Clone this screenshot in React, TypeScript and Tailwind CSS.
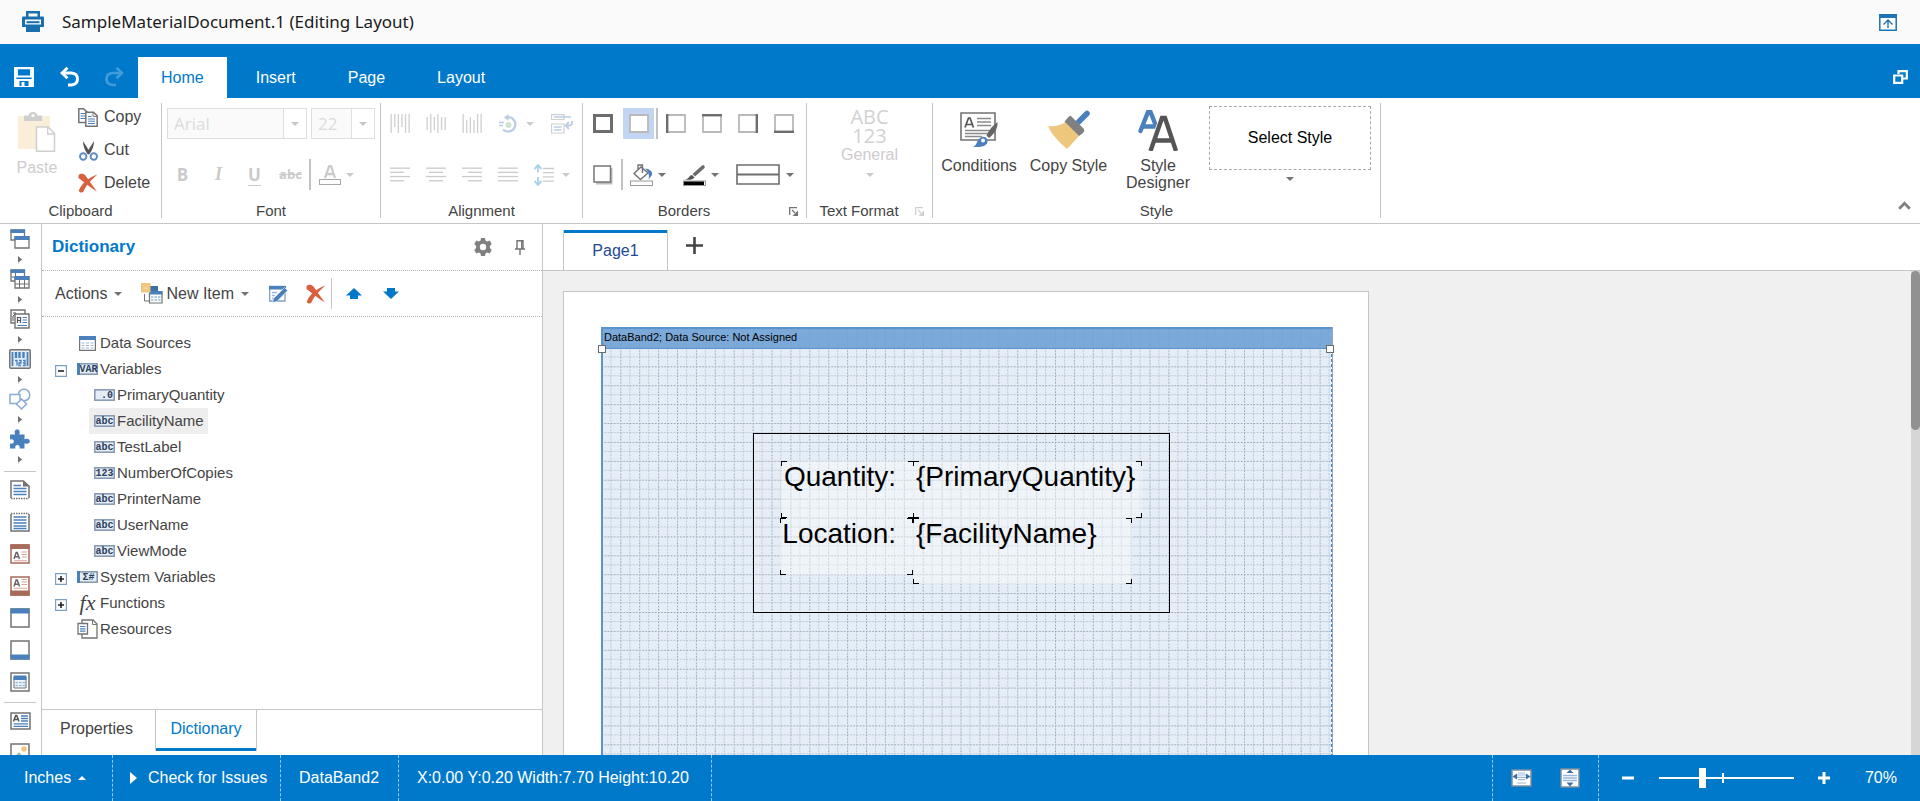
import React from "react";
import type { ReactNode } from "react";

const GRAY = "#737373";
const BLUE = "#4a80bb";

/* ---------- small helpers ---------- */

function Caret({ className = "text-[#737373]", dir = "down" }: { className?: string; dir?: "down" | "up" | "right" }) {
  if (dir === "right")
    return (
      <svg width="4" height="7" viewBox="0 0 4 7" className={className} aria-hidden="true">
        <path d="M0 0L4 3.5L0 7Z" fill="currentColor" />
      </svg>
    );
  return (
    <svg width="8" height="4" viewBox="0 0 8 4" className={className} aria-hidden="true">
      <path d={dir === "down" ? "M0 0H8L4 4Z" : "M0 4H8L4 0Z"} fill="currentColor" />
    </svg>
  );
}

function IconButton({
  label,
  width = "w-9",
  disabled = false,
  className = "",
  children,
}: {
  label: string;
  width?: string;
  disabled?: boolean;
  className?: string;
  children: ReactNode;
}) {
  return (
    <button
      type="button"
      aria-label={label}
      disabled={disabled}
      className={`flex h-[31px] shrink-0 items-center justify-center ${width} ${className}`}
    >
      {children}
    </button>
  );
}

function Group({ label, width, launcher, children }: { label: string; width: string; launcher?: string; children: ReactNode }) {
  return (
    <section aria-label={label} className={`flex shrink-0 ${width}`}>
      <div className="flex min-w-0 flex-1 flex-col pt-[5px]">
        <div className="h-[94px]">{children}</div>
        <div className="mt-1 flex h-5 items-center pr-2 text-[15px] leading-5">
          <span className={`flex-1 text-center ${launcher ? "pr-1" : "pl-2"}`}>{label}</span>
          {launcher && (
            <button type="button" aria-label={`${label} settings`} className={launcher}>
              <svg width="9" height="9" viewBox="0 0 9 9" aria-hidden="true">
                <path d="M.7 8V.7H8" fill="none" stroke="currentColor" strokeWidth="1.3" />
                <path d="M3 3L6 6" stroke="currentColor" strokeWidth="1.3" />
                <path d="M9 3.5V9H3.5Z" fill="currentColor" />
              </svg>
            </button>
          )}
        </div>
      </div>
      <div className="my-[5px] w-px bg-[#c6c6c6]" />
    </section>
  );
}

/* ---------- ribbon icons ---------- */

const DeleteIcon = () => (
  <svg width="20" height="20" viewBox="0 0 20 20" aria-hidden="true">
    <path d="M.5 2.500C1.500 0 5.500 0 7.500 2.500C10 6 14 12 19 18.500C12 14.500 6 9 .5 5Z" fill="#d9603f" />
    <path d="M19.500 1.500C14 6 8 12 5.500 18.500C4 20 1.500 20 .8 17.500C4 10 10.500 4.500 19.500 1.500Z" fill="#d9603f" />
  </svg>
);

const CopyIcon = () => (
  <svg width="20" height="19" viewBox="0 0 20 19" fill="none" aria-hidden="true">
    <path d="M.8.800H5.500L9.200 4.200V14.500H.8Z" fill="#fff" stroke={GRAY} strokeWidth="1.500" />
    <path d="M2.500 5.500H7M2.500 8H7M2.500 10.500H7" stroke={BLUE} />
    <path d="M7.800 4.200H15.500L19.200 7.800V18.200H7.800Z" fill="#fff" stroke={GRAY} strokeWidth="1.500" />
    <path d="M15 4.500V8.300H19" stroke={GRAY} />
    <path d="M10 8.500H13.500M10 11H17M10 13.200H17M10 15.500H17" stroke={BLUE} />
  </svg>
);

const CutIcon = () => (
  <svg width="19" height="21" viewBox="0 0 19 21" fill="none" aria-hidden="true">
    <path d="M4 1L11.500 13L9 14.500C5.500 10 4 6 4 1Z" fill="#555" />
    <path d="M15 1L7.500 13L10 14.500C13.500 10 15 6 15 1Z" fill="#555" />
    <circle cx="4.200" cy="16.500" r="3.200" stroke="#5b8cc4" strokeWidth="1.900" />
    <circle cx="14.800" cy="16.500" r="3.200" stroke="#5b8cc4" strokeWidth="1.900" />
  </svg>
);

const PasteIcon = () => (
  <svg width="38" height="40" viewBox="0 0 38 40" aria-hidden="true">
    <path d="M0 4H32V37H0Z" fill="#faeed8" />
    <path d="M6 9V4.500Q6 3.500 7 3.500H10.500Q11 0 15 0T19.500 3.500H23Q24 3.500 24 4.500V9Z" fill="#cfcfcf" />
    <circle cx="15" cy="3.500" r="1.600" fill="#fff" />
    <path d="M18.500 15H30L36.500 21.500V39.200H18.500Z" fill="#fff" stroke="#cfcfcf" strokeWidth="1.500" />
    <path d="M29.700 15V22H36.500" fill="none" stroke="#cfcfcf" strokeWidth="1.300" />
  </svg>
);

function Bars({ tops, heights }: { tops: number[]; heights: number[] }) {
  return (
    <svg width="20" height="19" viewBox="0 0 20 19" aria-hidden="true">
      {tops.map((t, i) => (
        <rect key={i} x={0.5 + i * 3.600} y={t} width="1.300" height={heights[i]} fill="#cfcfcf" />
      ))}
    </svg>
  );
}

function Lines({ rows }: { rows: [number, number][] }) {
  return (
    <svg width="20" height="15" viewBox="0 0 20 15" aria-hidden="true">
      {rows.map(([x, w], i) => (
        <rect key={i} x={x} y={0.500 + i * 4.200} width={w} height="1.300" fill="#cbcbcb" />
      ))}
    </svg>
  );
}

function BorderIcon({ side }: { side: "all" | "none" | "left" | "top" | "right" | "bottom" }) {
  const marks = {
    all: "M1.500 1.500H18.500V17.500H1.500Z",
    none: "",
    left: "M1.200 0V19",
    top: "M0 1.200H20",
    right: "M18.800 0V19",
    bottom: "M0 17.800H20",
  };
  return (
    <svg width="20" height="19" viewBox="0 0 20 19" fill="none" aria-hidden="true">
      <path d="M1 1H19V18H1Z" fill="#fff" stroke="#b9b9b9" strokeWidth="1.800" />
      <path d={marks[side]} stroke="#6d6d6d" strokeWidth={side === "all" ? 3 : 2.400} />
    </svg>
  );
}

const ConditionsIcon = () => (
  <svg width="38" height="36" viewBox="0 0 38 36" fill="none" aria-hidden="true">
    <path d="M1 1H35V28H1Z" fill="#fff" stroke={GRAY} strokeWidth="1.600" />
    <path d="M5 15.500L8.500 6H10L13.500 15.500M6.500 12.500H12" stroke="#555" strokeWidth="1.700" />
    <path d="M17 6.500H31M17 10H31M17 13.500H31M5 18.500H31M5 21.500H29M5 24.500H22" stroke="#8a8a8a" strokeWidth="1.300" />
    <path d="M37.500 10C38 17 34 22 29 26L26.500 23.500C28.500 19 32 14 37.500 10Z" fill="#666" />
    <path d="M13 35C18 33 16 27 22 25C26 24 29 28 27 31.500C24 35.500 18 35 13 35Z" fill={BLUE} />
    <circle cx="23" cy="28.500" r="2" fill="#fff" />
  </svg>
);

const BroomIcon = () => (
  <svg width="43" height="40" viewBox="0 0 43 40" aria-hidden="true">
    <path d="M31.500 12L40 3.500" stroke={BLUE} strokeWidth="5.500" strokeLinecap="round" />
    <path d="M18.500 12L32 26L20 39C12 32 5 25 1 16C8 17 14 15 18.500 12Z" fill="#efc77c" />
    <path d="M24 6L37 19Q38 21 36 23L32 26L17.500 11.500L21 7.500Q23 5 24 6Z" fill="#808080" />
  </svg>
);

const StyleAAIcon = () => (
  <svg width="40" height="41" viewBox="0 0 40 41" fill="none" aria-hidden="true">
    <path d="M2.500 21L10 2H12.500L20 21M4.500 16.500H18" stroke={BLUE} strokeWidth="4.400" strokeLinecap="round" />
    <path d="M12.500 41L24 8H27L38 41M16 30.500H34.500" stroke="#fff" strokeWidth="6" />
    <path d="M12.500 41L24 8H27L38 41M16 30.500H34.500" stroke="#555" strokeWidth="4.400" />
  </svg>
);

/* ---------- ribbon ---------- */

function Combo({ label, value, width }: { label: string; value: string; width: string }) {
  return (
    <div className={`grid h-[31px] ${width}`}>
      <select
        disabled
        aria-label={label}
        defaultValue={value}
        className="[grid-area:1/1] w-full appearance-none border border-[#dedede] bg-[#fafafa] px-[6px] font-['Open_Sans',sans-serif] text-[17px] leading-6 text-[#dcdcdc] opacity-100"
      >
        <option>{value}</option>
      </select>
      <span className="pointer-events-none [grid-area:1/1] flex w-6 items-center justify-center justify-self-end border border-[#dedede] bg-white">
        <Caret className="text-[#c6c6c6]" />
      </span>
    </div>
  );
}

function BigButton({ label, width, icon }: { label: string; width: string; icon: ReactNode }) {
  return (
    <button type="button" className={`flex flex-col items-center text-base leading-[17px] ${width}`}>
      <span className="flex h-[54px] items-center">{icon}</span>
      {label}
    </button>
  );
}

function Ribbon() {
  return (
    <div className="flex h-[126px] shrink-0 border-b border-[#c6c6c6] bg-white">
      <Group label="Clipboard" width="w-[162px]">
        <div className="flex">
          <button type="button" disabled className="flex w-[74px] flex-col items-center pt-[9px] text-base leading-5 text-[#cfcbcf]">
            <PasteIcon />
            <span className="mt-[6px]">Paste</span>
          </button>
          <div className="flex h-[94px] flex-col justify-between pl-1">
            {[
              ["Copy", <CopyIcon />],
              ["Cut", <CutIcon />],
              ["Delete", <DeleteIcon />],
            ].map(([t, icon]) => (
              <button key={t as string} type="button" className="flex h-7 items-center gap-[6px] text-base">
                <span className="flex w-5 justify-center">{icon}</span>
                {t}
              </button>
            ))}
          </div>
        </div>
      </Group>

      <Group label="Font" width="w-[219px]">
        <div className="flex flex-col gap-5 pt-[5px] pl-[5px]">
          <div className="flex gap-1">
            <Combo label="Font family" value="Arial" width="w-[140px]" />
            <Combo label="Font size" value="22" width="w-16" />
          </div>
          <div className="flex font-['Open_Sans',sans-serif] text-[17px] font-bold text-[#cbcbcb]">
            <IconButton label="Bold" disabled width="w-[31px]">B</IconButton>
            <IconButton label="Italic" disabled width="w-[41px]" className="font-['Liberation_Serif',serif] text-[18px] italic">I</IconButton>
            <IconButton label="Underline" disabled width="w-[31px]" className="underline underline-offset-4">U</IconButton>
            <IconButton label="Strikethrough" disabled width="w-[41px]" className="text-[13px] line-through">abc</IconButton>
            <div className="-ml-0.5 w-0.5 bg-[#c2c2c2]" />
            <IconButton label="Font colour" disabled width="w-[37px]">
              <svg width="22" height="20" viewBox="0 0 22 20" aria-hidden="true">
                <path d="M6 13L10.200 1H12L16 13M7.500 9H14.500" fill="none" stroke="#cbcbcb" strokeWidth="2.300" />
                <rect x=".5" y="14.500" width="21" height="5" fill="#fff" stroke="#a8a8a8" />
              </svg>
            </IconButton>
            <IconButton label="Font colour options" disabled width="w-2" className="-ml-0.5">
              <Caret className="text-[#cbcbcb]" />
            </IconButton>
          </div>
        </div>
      </Group>

      <Group label="Alignment" width="w-[202px]">
        <div className="flex flex-col gap-5 pt-[5px] pl-px">
          <div className="flex">
            <IconButton label="Align top" disabled>
              <Bars tops={[0, 0, 0, 0, 0, 0]} heights={[19, 13, 19, 13, 19, 19]} />
            </IconButton>
            <IconButton label="Align middle" disabled>
              <Bars tops={[3, 0, 3, 0, 3, 3]} heights={[13, 19, 13, 19, 13, 13]} />
            </IconButton>
            <IconButton label="Align bottom" disabled>
              <Bars tops={[0, 6, 3, 6, 0, 0]} heights={[19, 13, 16, 13, 19, 19]} />
            </IconButton>
            <IconButton label="Rotation" disabled>
              <svg width="19" height="20" viewBox="0 0 19 20" fill="none" aria-hidden="true">
                <path d="M8.500 3.200A7.200 7.200 0 1 1 4 15.500" stroke="#bccde4" strokeWidth="2.300" />
                <path d="M9.500 0V7L5 3.500Z" fill="#bccde4" />
                <path d="M0 8.500H5M0 11.500H4" stroke="#bccde4" strokeWidth="1.500" />
                <circle cx="9.500" cy="11" r="3" fill="#cfe3d3" />
              </svg>
            </IconButton>
            <IconButton label="Rotation options" disabled width="w-2">
              <Caret className="text-[#cbcbcb]" />
            </IconButton>
            <IconButton label="Wrap text" disabled width="w-14">
              <svg width="22" height="20" viewBox="0 0 22 20" fill="none" aria-hidden="true">
                <path d="M.6.600H13V5.500H.6ZM.6 10H13V19H.6Z" stroke="#cfcfcf" strokeWidth="1.200" />
                <path d="M3 3H20M3 13H10.500M3 16H10.500" stroke="#bccde4" strokeWidth="1.300" />
                <path d="M21 7V9Q21 11.500 18 11.500H15M18 8L14.500 11.500L18 15" stroke="#bccde4" strokeWidth="1.800" />
              </svg>
            </IconButton>
          </div>
          <div className="flex">
            <IconButton label="Align left" disabled>
              <Lines rows={[[0, 20], [0, 14], [0, 20], [0, 14]]} />
            </IconButton>
            <IconButton label="Align centre" disabled>
              <Lines rows={[[0, 20], [3, 14], [0, 20], [3, 14]]} />
            </IconButton>
            <IconButton label="Align right" disabled>
              <Lines rows={[[0, 20], [6, 14], [0, 20], [6, 14]]} />
            </IconButton>
            <IconButton label="Justify" disabled>
              <Lines rows={[[0, 20], [0, 20], [0, 20], [0, 20]]} />
            </IconButton>
            <IconButton label="Line spacing" disabled>
              <svg width="20" height="22" viewBox="0 0 20 22" fill="none" aria-hidden="true">
                <path d="M4 2V8.500M4 13V20" stroke="#a9d3ea" strokeWidth="1.800" />
                <path d="M.5 5L4 1L7.500 5M.5 17L4 21L7.500 17" stroke="#a9d3ea" strokeWidth="1.900" />
                <path d="M9 4.500H20M9 8.700H20M9 12.900H20M9 17.100H20" stroke="#cbcbcb" strokeWidth="1.300" />
              </svg>
            </IconButton>
            <IconButton label="Line spacing options" disabled width="w-2">
              <Caret className="text-[#cbcbcb]" />
            </IconButton>
          </div>
        </div>
      </Group>

      <Group label="Borders" width="w-56" launcher="text-[#737373]">
        <div className="flex flex-col gap-5 pt-[5px] pl-0.5">
          <div className="flex">
            <IconButton label="All borders"><BorderIcon side="all" /></IconButton>
            <IconButton label="No border" width="w-[31px]" className="ml-0.5 bg-[#c2d5f2]"><BorderIcon side="none" /></IconButton>
            <div className="ml-0.5 w-0.5 bg-[#c2c2c2]" />
            <IconButton label="Left border"><BorderIcon side="left" /></IconButton>
            <IconButton label="Top border"><BorderIcon side="top" /></IconButton>
            <IconButton label="Right border"><BorderIcon side="right" /></IconButton>
            <IconButton label="Bottom border"><BorderIcon side="bottom" /></IconButton>
          </div>
          <div className="flex">
            <IconButton label="Shadow">
              <svg width="20" height="20" viewBox="0 0 20 20" aria-hidden="true">
                <path d="M3 3H19.500V19.500H3Z" fill="#bdbdbd" />
                <path d="M1 1H17.500V17H1Z" fill="#fff" stroke="#777" strokeWidth="1.500" />
              </svg>
            </IconButton>
            <div className="w-0.5 bg-[#c2c2c2]" />
            <IconButton label="Fill colour">
              <svg width="23" height="22" viewBox="0 0 23 22" fill="none" aria-hidden="true">
                <path d="M4 9.500L11 3L18 9L10.500 15.500Z" stroke={GRAY} strokeWidth="1.400" />
                <path d="M8 5.500V1H12.500V9" stroke={GRAY} strokeWidth="1.400" />
                <path d="M15 4.500C20 5 23 8 22 11L18.500 15.500C19.500 12 19 8 15 4.500Z" fill={BLUE} />
                <rect x=".5" y="17" width="22" height="4.500" fill="#fff" stroke="#999" />
              </svg>
            </IconButton>
            <IconButton label="Fill colour options" width="w-2" className="-ml-px"><Caret /></IconButton>
            <IconButton label="Border colour" width="w-14">
              <svg width="23" height="22" viewBox="0 0 23 22" aria-hidden="true">
                <path d="M21 1.500C22 2.500 22 3.500 21 4.500L12 12.500L9.500 10L19 1.500Q20 .5 21 1.500Z" fill="#6d6d6d" />
                <path d="M9 11L11.500 13.500C10 16 6 16 2 15.500C6 15 6 11.500 9 11Z" fill="#555" />
                <rect x=".5" y="17" width="22" height="4.500" fill="#fff" stroke="#999" />
                <rect x="1" y="17.500" width="20" height="3.500" fill="#000" />
              </svg>
            </IconButton>
            <IconButton label="Border colour options" width="w-2" className="-ml-[11px]"><Caret /></IconButton>
            <IconButton label="Border style" width="w-[78px]">
              <svg width="44" height="21" viewBox="0 0 44 21" fill="none" aria-hidden="true">
                <path d="M1 1H43V20H1Z" stroke="#6d6d6d" strokeWidth="1.600" />
                <path d="M1 10.500H43" stroke="#6d6d6d" strokeWidth="2" />
              </svg>
            </IconButton>
            <IconButton label="Border style options" width="w-2" className="-ml-[11px]"><Caret /></IconButton>
          </div>
        </div>
      </Group>

      <Group label="Text Format" width="w-[126px]" launcher="text-[#d0d0d0]">
        <button type="button" disabled className="flex w-full flex-col items-center pt-1 text-[#cfcbcf]">
          <span className="font-['Open_Sans',sans-serif] text-xl leading-[19px] text-[#d2d2d2]">
            ABC
            <br />
            123
          </span>
          <span className="text-base leading-5">General</span>
          <Caret className="mt-2 text-[#cbcbcb]" />
        </button>
      </Group>

      <Group label="Style" width="w-[448px]">
        <div className="flex">
          <BigButton label="Conditions" width="w-[92px]" icon={<ConditionsIcon />} />
          <BigButton label="Copy Style" width="w-[87px]" icon={<BroomIcon />} />
          <BigButton label="Style Designer" width="w-[92px]" icon={<StyleAAIcon />} />
          <button type="button" className="ml-[5px] flex w-[162px] flex-col items-center pt-[3px] text-base text-black">
            <span className="flex h-16 w-full items-center justify-center border border-dashed border-[#a8a8a8]">Select Style</span>
            <Caret className="mt-[7px] text-[#737373]" />
          </button>
        </div>
      </Group>

      <button type="button" aria-label="Collapse ribbon" className="mt-auto mr-[9px] mb-[13px] ml-auto">
        <svg width="13" height="9" viewBox="0 0 13 9" fill="none" aria-hidden="true">
          <path d="M1.200 7.800L6.500 2.200L11.800 7.800" stroke="#808080" strokeWidth="2.800" />
        </svg>
      </button>
    </div>
  );
}

/* ---------- toolbox ---------- */

const toolGroups: { label: string; icon: ReactNode }[] = [
  {
    label: "Bands",
    icon: (
      <svg width="20" height="20" viewBox="0 0 20 20" fill="none" aria-hidden="true">
        <path d="M1 1H14.500V11H1Z" fill="#fff" stroke={GRAY} strokeWidth="1.300" />
        <path d="M.5.500H15V4H.5Z" fill={BLUE} />
        <path d="M5 8H19V19H5Z" fill="#fff" stroke={GRAY} strokeWidth="1.300" />
        <path d="M4.500 7H19.500V11H4.500Z" fill={BLUE} />
      </svg>
    ),
  },
  {
    label: "Cross bands",
    icon: (
      <svg width="20" height="20" viewBox="0 0 20 20" fill="none" aria-hidden="true">
        <path d="M1 1H14.500V12H1Z" fill="#fff" stroke={GRAY} strokeWidth="1.300" />
        <path d="M1 8H15M5.500 4V12" stroke={GRAY} />
        <path d="M.5.500H15V4H.5Z" fill={BLUE} />
        <path d="M5 8H19V19H5Z" fill="#fff" stroke={GRAY} strokeWidth="1.300" />
        <path d="M5 15H19M9.500 11V19M14.500 11V19" stroke={GRAY} />
        <path d="M4.500 7H19.500V11H4.500Z" fill={BLUE} />
      </svg>
    ),
  },
  {
    label: "Components",
    icon: (
      <svg width="20" height="20" viewBox="0 0 20 20" fill="none" aria-hidden="true">
        <path d="M1 1H15V14H1Z" fill="#fff" stroke={GRAY} strokeWidth="1.400" />
        <path d="M3 4H6M3 12V7L6 4" stroke="#555" />
        <path d="M5 5H19V19H5Z" fill="#fff" stroke={GRAY} strokeWidth="1.400" />
        <path d="M7.500 14V8.500H10.500V14M7.500 11.500H10.500" stroke="#555" strokeWidth="1.200" />
        <path d="M12.500 8.500H17M12.500 11H17M12.500 13.500H17M7.500 16.500H17" stroke={BLUE} strokeWidth="1.200" />
      </svg>
    ),
  },
  {
    label: "Barcodes",
    icon: (
      <svg width="22" height="20" viewBox="0 0 22 20" fill="none" aria-hidden="true">
        <rect x=".8" y=".8" width="20.400" height="18.400" rx="1" fill="#e4edf7" stroke={GRAY} strokeWidth="1.500" />
        <path d="M3.500 3V17M18.500 3V17" stroke={BLUE} strokeWidth="1.800" />
        <path d="M7 3V9M10.500 3V9M14.500 3V9" stroke={BLUE} strokeWidth="2.400" />
        <path d="M6 11.500H8V16.500M10 11.500H12V14H10V16.500H12M14 11.500H16V16.500H14M14 14H16" stroke={BLUE} strokeWidth="1.300" />
      </svg>
    ),
  },
  {
    label: "Shapes",
    icon: (
      <svg width="22" height="22" viewBox="0 0 22 22" fill="none" aria-hidden="true">
        <circle cx="15" cy="7" r="5.800" fill="#fff" stroke="#8aacd2" strokeWidth="1.500" />
        <path d="M1 6.500H11V15.500H1Z" fill="#fff" stroke="#8aacd2" strokeWidth="1.500" />
        <path d="M12.500 11L17.500 16L12.500 21L7.500 16Z" fill="#fff" stroke="#8aacd2" strokeWidth="1.500" />
      </svg>
    ),
  },
  {
    label: "Plug-ins",
    icon: (
      <svg width="20" height="20" viewBox="0 0 20 20" aria-hidden="true">
        <path
          d="M0 5.500H5.200C4 2.500 5 .5 7.200 .5S10.500 2.500 9.300 5.500H14.500V10.200C17.500 9 19.800 10 19.800 12.300S17.500 15.500 14.500 14.300V19.500H9.500C10.200 17.500 9.200 16 7.500 16S4.700 17.500 5.400 19.500H0V14.500C2.200 15.200 3.800 14.200 3.800 12.500S2.200 9.800 0 10.500Z"
          fill={BLUE}
        />
      </svg>
    ),
  },
];

const frame = <path d="M1 1H19V19H1Z" fill="#fff" stroke={GRAY} strokeWidth="1.500" />;

const bandTools: { label: string; icon: ReactNode }[] = [
  {
    label: "Report title",
    icon: (
      <>
        <path d="M1 18V1H13.500L19 6V18" fill="#fff" stroke={GRAY} strokeWidth="1.500" />
        <path d="M1 18.500H19" stroke={GRAY} strokeWidth="1.500" strokeDasharray="1.500 1" />
        <path d="M13 1V6.500H19Z" fill={GRAY} />
        <path d="M3.500 5.500H11M3.500 8.500H16.500M3.500 11.500H16.500M3.500 14.500H16.500" stroke={BLUE} strokeWidth="1.500" />
      </>
    ),
  },
  {
    label: "Report summary",
    icon: (
      <>
        <path d="M1 2V19H19V2" fill="#fff" stroke={GRAY} strokeWidth="1.500" />
        <path d="M1 1.500H19" stroke={GRAY} strokeWidth="1.500" strokeDasharray="1.500 1" />
        <path d="M3.500 5H16.500M3.500 8H16.500M3.500 11H16.500M3.500 14H16.500M3.500 16.500H16.500" stroke={BLUE} strokeWidth="1.500" />
      </>
    ),
  },
  {
    label: "Page header",
    icon: (
      <>
        <path d="M1 1H19V19H1Z" fill="#fff" stroke="#a86b59" strokeWidth="1.500" />
        <path d="M.3.300H19.700V5H.3Z" fill="#a86b59" />
        <path d="M4 15L6.200 8.500H7.200L9.500 15M5 12.800H8.500" stroke="#666" strokeWidth="1.500" />
        <path d="M11.500 8H17M11.500 10.500H17M11.500 13H17M4 16.800H17" stroke="#d8a79a" strokeWidth="1.100" />
      </>
    ),
  },
  {
    label: "Page footer",
    icon: (
      <>
        <path d="M1 1H19V19H1Z" fill="#fff" stroke="#a86b59" strokeWidth="1.500" />
        <path d="M.3 14.500H19.700V19.700H.3Z" fill="#a86b59" />
        <path d="M4 10.500L6.200 4H7.200L9.500 10.500M5 8.300H8.500" stroke="#666" strokeWidth="1.500" />
        <path d="M11.500 3.500H17M11.500 6H17M11.500 8.500H17M4 12.300H17" stroke="#d8a79a" strokeWidth="1.100" />
      </>
    ),
  },
  { label: "Group header", icon: <>{frame}<path d="M.5.500H19.500V5.500H.5Z" fill={BLUE} /></> },
  { label: "Group footer", icon: <>{frame}<path d="M.5 14.500H19.500V19.500H.5Z" fill={BLUE} /></> },
  {
    label: "Data",
    icon: (
      <>
        {frame}
        <path d="M4 5H16V16H4Z" fill="#f2f7fc" stroke={GRAY} />
        <path d="M3.500 3.500H16.500V8H3.500Z" fill={BLUE} />
        <path d="M5.500 10.500H8M9 10.500H11.500M12.500 10.500H15M5.500 13.500H8M9 13.500H11.500M12.500 13.500H15" stroke="#9bb9dc" strokeWidth="1.400" />
      </>
    ),
  },
];

function Toolbox() {
  return (
    <nav aria-label="Toolbox" className="flex w-[42px] shrink-0 flex-col items-center overflow-hidden border-r border-[#c6c6c6] bg-white pt-[5px] pr-px">
      {toolGroups.map((t) => (
        <button key={t.label} type="button" aria-label={t.label} className="flex shrink-0 flex-col items-center">
          <span className="flex h-5 items-center">{t.icon}</span>
          <span className="flex h-5 items-center">
            <Caret dir="right" />
          </span>
        </button>
      ))}
      <div className="my-0.5 h-px w-8 shrink-0 bg-[#c6c6c6]" />
      {bandTools.map((t) => (
        <button key={t.label} type="button" aria-label={t.label} className="flex h-8 shrink-0 items-center">
          <svg width="20" height="20" viewBox="0 0 20 20" fill="none" aria-hidden="true">
            {t.icon}
          </svg>
        </button>
      ))}
      <div className="mt-1 mb-0.5 h-px w-8 shrink-0 bg-[#c6c6c6]" />
      <button type="button" aria-label="Text" className="flex h-8 shrink-0 items-center">
        <svg width="21" height="18" viewBox="0 0 21 18" fill="none" aria-hidden="true">
          <path d="M1 1H20V17H1Z" fill="#fff" stroke={GRAY} strokeWidth="1.500" />
          <path d="M3.500 9.500L5.700 3.500H6.700L9 9.500M4.500 7.500H8" stroke="#555" strokeWidth="1.500" />
          <path d="M11 4H18M11 6.500H18M11 9H18M3.500 11.800H18M3.500 14.300H18" stroke={BLUE} strokeWidth="1.300" />
        </svg>
      </button>
      <button type="button" aria-label="Image" className="flex h-8 shrink-0 items-center">
        <svg width="20" height="20" viewBox="0 0 20 20" fill="none" aria-hidden="true">
          {frame}
          <circle cx="14" cy="6" r="2.700" fill="#efc77c" />
          <path d="M3 16L9 9L15 16Z" fill="#9cc3a5" />
        </svg>
      </button>
    </nav>
  );
}

/* ---------- dictionary panel ---------- */

function Tag({ text }: { text: string }) {
  const wide = text === "VAR" || text === "Σ#";
  return (
    <svg width="21" height="12" viewBox="0 0 21 12" aria-hidden="true">
      <rect x=".8" y=".8" width="19.400" height="10.400" fill="#e4ecf6" stroke="#8496b0" strokeWidth="1.500" />
      {wide ? <rect x="0" y="0" width="3" height="12" fill={BLUE} /> : null}
      <text
        x={text === ".0" ? 13 : wide ? 11.500 : 10.500}
        y="9.2"
        textAnchor="middle"
        fontFamily="Liberation Mono, monospace"
        fontWeight="700"
        fontSize="10"
        fill="#2c3f5c"
      >
        {text}
      </text>
    </svg>
  );
}

const variables: [string, string][] = [
  [".0", "PrimaryQuantity"],
  ["abc", "FacilityName"],
  ["abc", "TestLabel"],
  ["123", "NumberOfCopies"],
  ["abc", "PrinterName"],
  ["abc", "UserName"],
  ["abc", "ViewMode"],
];

function TreeRow({ toggle, icon, label }: { toggle?: "+" | "-"; icon: ReactNode; label: string }) {
  return (
    <div className="flex h-[26px] items-center pl-[13px]">
      <span className="flex w-[21px] pt-1">
        {toggle && (
          <button type="button" aria-label={`Toggle ${label}`}>
            <svg width="12" height="12" viewBox="0 0 12 12" className="block" aria-hidden="true">
              <path d="M.6.600H11.400V11.400H.6Z" fill="#fff" stroke="#7fa0c4" strokeWidth="1.200" />
              <path d={toggle === "+" ? "M3 6H9M6 3V9" : "M3 6H9"} stroke="#222" strokeWidth="1.600" />
            </svg>
          </button>
        )}
      </span>
      <span className="mr-px flex w-[23px] justify-center">{icon}</span>
      {label}
    </div>
  );
}

function DictionaryPanel() {
  return (
    <aside className="flex w-[501px] shrink-0 flex-col border-r border-[#c6c6c6] bg-white">
      <div className="flex h-[47px] shrink-0 items-center border-b border-dotted border-[#b5b5b5] pr-[17px] pl-[10px]">
        <h2 className="flex-1 text-[17px] font-bold text-[#0079cb]">Dictionary</h2>
        <button type="button" aria-label="Settings" className="mr-[23px]">
          <svg width="18" height="18" viewBox="0 0 18 18" aria-hidden="true">
            <path
              fillRule="evenodd"
              fill="#808080"
              d="M7 0H11L11.500 2.500L13.200 3.400L15.700 2.600L17.700 6L15.900 7.900V10.100L17.700 12L15.700 15.400L13.200 14.600L11.500 15.500L11 18H7L6.500 15.500L4.800 14.600L2.300 15.400L.3 12L2.100 10.100V7.900L.3 6L2.300 2.600L4.800 3.400L6.500 2.500ZM9 5.800A3.200 3.200 0 1 0 9 12.200A3.200 3.200 0 1 0 9 5.800Z"
            />
          </svg>
        </button>
        <button type="button" aria-label="Pin panel">
          <svg width="10" height="15" viewBox="0 0 10 15" fill="none" aria-hidden="true">
            <path d="M2 8.500V.7H8V8.500M0 9H10M5 9V15" stroke="#737373" strokeWidth="1.400" />
            <path d="M6.800 1V9" stroke="#737373" strokeWidth="1.500" />
          </svg>
        </button>
      </div>

      <div className="flex h-[46px] shrink-0 items-center border-b border-dotted border-[#b5b5b5] pl-[13px] text-base">
        <button type="button" className="flex items-center gap-[7px]">
          Actions <Caret />
        </button>
        <button type="button" className="ml-[19px] flex items-center">
          <svg width="22" height="21" viewBox="0 0 22 21" fill="none" aria-hidden="true">
            <path d="M3.500 11V18H9" stroke={GRAY} />
            <path d="M8 3H17V8H8Z" fill="#3f6fa8" />
            <path d="M8.500 9H21V20H8.500Z" fill="#fff" stroke={GRAY} strokeWidth="1.200" />
            <path d="M8 8H21.500V11.500H8Z" fill={BLUE} />
            <path d="M10 14H12.500M13.500 14H16M17 14H19.500M10 17H12.500M13.500 17H16M17 17H19.500" stroke="#9bb9dc" strokeWidth="1.500" />
            <path d="M0 0H9.500V9.500H0Z" fill="#efc77c" />
            <path d="M2.500 2.500L7 7M7 2.500L2.500 7" stroke="#fbeed3" strokeDasharray="1 1" />
          </svg>
          <span className="mr-[7px] ml-[3px]">New Item</span>
          <Caret />
        </button>
        <button type="button" aria-label="Edit" className="ml-5">
          <svg width="19" height="18" viewBox="0 0 19 18" fill="none" aria-hidden="true">
            <path d="M.7 1.500H16V16H.7Z" fill="#fff" stroke="#7fa0c4" strokeWidth="1.300" />
            <path d="M0 1H17V4.500H0Z" fill={BLUE} />
            <path d="M3 7.500H8M3 10.500H6M3 13.500H5" stroke="#9bb9dc" strokeWidth="1.400" />
            <path d="M4.500 13.500L15.500 2.500L18.700 5.500L8 16.500L3.500 17.500Z" fill={BLUE} stroke="#fff" strokeWidth=".6" />
          </svg>
        </button>
        <button type="button" aria-label="Delete item" className="ml-[18px]">
          <DeleteIcon />
        </button>
        <div className="ml-[5px] h-[31px] w-px bg-[#c6c6c6]" />
        <button type="button" aria-label="Move up" className="ml-[14px]">
          <svg width="16" height="11" viewBox="0 0 16 11" aria-hidden="true">
            <path d="M8 0L16 7.500H12V11H4V7.500H0Z" fill="#0079cb" />
          </svg>
        </button>
        <button type="button" aria-label="Move down" className="ml-[21px]">
          <svg width="16" height="11" viewBox="0 0 16 11" aria-hidden="true">
            <path d="M8 11L16 3.500H12V0H4V3.500H0Z" fill="#0079cb" />
          </svg>
        </button>
      </div>

      <ul className="min-h-0 flex-1 overflow-hidden pt-[13px] text-[15px]">
        <li>
          <TreeRow
            label="Data Sources"
            icon={
              <svg width="17" height="15" viewBox="0 0 17 15" fill="none" aria-hidden="true">
                <path d="M.6.600H16.400V14.400H.6Z" fill="#fff" stroke={GRAY} strokeWidth="1.200" />
                <path d="M0 0H17V4H0Z" fill={BLUE} />
                <path d="M2.500 7H5.500M7 7H10M11.500 7H14.500M2.500 9.500H5.500M7 9.500H10M11.500 9.500H14.500M2.500 12H5.500M7 12H10M11.500 12H14.500" stroke="#9bb9dc" />
              </svg>
            }
          />
        </li>
        <li>
          <TreeRow toggle="-" label="Variables" icon={<Tag text="VAR" />} />
          <ul className="pl-[47px]">
            {variables.map(([tag, name]) => (
              <li key={name} className={`flex h-[26px] w-fit items-center gap-0.5 pr-1 pl-[5px] ${name === "FacilityName" ? "bg-[#eeeeee]" : ""}`}>
                <Tag text={tag} />
                {name}
              </li>
            ))}
          </ul>
        </li>
        <li>
          <TreeRow toggle="+" label="System Variables" icon={<Tag text="Σ#" />} />
        </li>
        <li>
          <TreeRow
            toggle="+"
            label="Functions"
            icon={<span className="font-['Liberation_Serif',serif] text-[22px] leading-5 text-[#444] italic">fx</span>}
          />
        </li>
        <li>
          <TreeRow
            label="Resources"
            icon={
              <svg width="21" height="20" viewBox="0 0 21 20" fill="none" aria-hidden="true">
                <path d="M5 1H16L20 5V19H5Z" fill="#fff" stroke={GRAY} strokeWidth="1.300" />
                <path d="M15.500 1V5.500H20" stroke={GRAY} />
                <path d="M1 4.500H10.500V15H1Z" fill="#fff" stroke={GRAY} strokeWidth="1.300" />
                <path d="M3 7.500H8.500M3 9.800H8.500M3 12.100H8.500" stroke={BLUE} strokeWidth="1.200" />
              </svg>
            }
          />
        </li>
      </ul>

      <div role="tablist" className="flex h-[46px] shrink-0 border-t border-[#c6c6c6] text-base">
        <button type="button" role="tab" aria-selected="false" className="h-[37px] w-[113px] pr-1">
          Properties
        </button>
        <button type="button" role="tab" aria-selected="true" className="flex h-[41px] w-[102px] flex-col items-center border-x border-[#c6c6c6] text-[#0079cb]">
          <span className="flex h-[37px] items-center">Dictionary</span>
          <span className="mt-px h-[3px] w-full bg-[#0079cb]" />
        </button>
      </div>
    </aside>
  );
}

/* ---------- design surface ---------- */

function TextBox({ place, className = "", children }: { place: string; className?: string; children: string }) {
  return (
    <div className={`absolute bg-white/40 text-[28px] leading-8 whitespace-nowrap text-black ${place} ${className}`}>
      <i className="absolute top-0 left-0 h-[5px] w-[6px] border-t border-l border-black" />
      <i className="absolute top-0 right-0 h-[5px] w-[6px] border-t border-r border-black" />
      <i className="absolute bottom-0 left-0 h-[5px] w-[6px] border-b border-l border-black" />
      <i className="absolute right-0 bottom-0 h-[5px] w-[6px] border-r border-b border-black" />
      {children}
    </div>
  );
}

function Surface() {
  return (
    <main className="flex min-w-0 flex-1 flex-col">
      <div role="tablist" className="flex h-[47px] shrink-0 items-end border-b border-[#c6c6c6] bg-white pl-5">
        <button type="button" role="tab" aria-selected="true" className="flex h-10 w-[105px] flex-col border-x border-[#c6c6c6] text-base text-[#23498f]">
          <span className="h-[3px] w-full bg-[#0079cb]" />
          <span className="flex w-full flex-1 items-center justify-center pb-0.5">Page1</span>
        </button>
        <button type="button" aria-label="Add page" className="mb-4 ml-[18px]">
          <svg width="17" height="17" viewBox="0 0 17 17" aria-hidden="true">
            <path d="M0 8.500H17M8.500 0V17" stroke="#444" strokeWidth="2.600" />
          </svg>
        </button>
      </div>
      <div className="flex min-h-0 flex-1 bg-[#f0f0f0]">
        <div className="min-w-0 flex-1 overflow-hidden pt-5 pl-5">
          <div className="h-[1100px] w-[806px] border border-[#c6c6c6] bg-white pt-[35px] pr-[35px] pl-[37px]">
            <div className="relative h-[980px] border-r border-l-2 border-r-[#9aa6b5] border-l-[#5b93cf] bg-[#e5edf6]">
              <svg width="100%" height="100%" className="absolute inset-0" aria-hidden="true">
                <defs>
                  <pattern id="grid" width="18.900" height="18.900" patternUnits="userSpaceOnUse" x="-1.600" y="1.500">
                    <path d="M9.450 0V18.900M0 9.450H18.900" stroke="#a9b5c4" strokeWidth=".8" strokeDasharray="1.600 1.550" />
                    <path d="M.5 0V18.900M0 .5H18.900" stroke="#939fb0" strokeWidth="1" strokeDasharray="1.600 1.550" />
                  </pattern>
                </defs>
                <rect width="100%" height="100%" fill="url(#grid)" />
              </svg>
              <div className="relative h-[22px] border-t-2 border-b border-[#5b93cf] bg-[#6fa1d5]/90 pl-px text-[11px] leading-[17px] text-black">
                DataBand2; Data Source: Not Assigned
              </div>
              <div className="absolute top-[22px] right-0 bottom-0 border-r border-dashed border-[#3f86d6] bg-white" />
              <i className="absolute top-[18px] -left-[5px] size-2 border border-[#6b6b6b] bg-white" />
              <i className="absolute top-[18px] -right-0.5 size-2 border border-[#6b6b6b] bg-white" />
              <div className="absolute top-[106px] left-[150px] h-[180px] w-[417px] border border-black" />
              <TextBox place="top-[134px] left-[178px] h-[57px] w-[133px]" className="pr-[18px] text-right">Quantity:</TextBox>
              <TextBox place="top-[134px] left-[310px] h-[57px] w-[229px]" className="pl-[3px]">{"{PrimaryQuantity}"}</TextBox>
              <TextBox place="top-[191px] left-[177px] h-[57px] w-[133px]" className="pr-[17px] text-right">Location:</TextBox>
              <TextBox place="top-[191px] left-[310px] h-[66px] w-[219px]" className="pl-[3px]">{"{FacilityName}"}</TextBox>
            </div>
          </div>
        </div>
        <div className="w-[9px] bg-[#d6d6d6]">
          <div className="h-[159px] rounded-full bg-[#919191]" />
        </div>
      </div>
    </main>
  );
}

/* ---------- status bar ---------- */

function StatusBar() {
  const cell = "flex items-center border-r border-dashed border-white/60";
  return (
    <footer className="flex h-[46px] shrink-0 bg-[#0079cb] text-base text-white">
      <button type="button" className={`${cell} w-[113px] gap-[7px] pl-6`}>
        Inches <Caret dir="up" className="text-white" />
      </button>
      <button type="button" className={`${cell} w-[168px] gap-[11px] pl-[17px]`}>
        <svg width="7" height="12" viewBox="0 0 7 12" aria-hidden="true">
          <path d="M0 0L7 6L0 12Z" fill="#fff" />
        </svg>
        Check for Issues
      </button>
      <span className={`${cell} w-[118px] pl-[18px]`}>DataBand2</span>
      <span className={`${cell} w-[313px] pl-[18px] whitespace-nowrap`}>X:0.00 Y:0.20 Width:7.70 Height:10.20</span>
      <div className={`${cell} ml-auto w-[107px] gap-7 border-l pl-[18px]`}>
        <button type="button" aria-label="Fit width">
          <svg width="21" height="18" viewBox="0 0 21 18" fill="none" aria-hidden="true">
            <path d="M1 1H20V17H1Z" fill="#fff" stroke="#7a8ea3" strokeWidth="1.500" />
            <path d="M7 4H14M6 6H15M6 8.300H15M7 10.600H14M6 14H15" stroke="#9bb9dc" strokeWidth="1.200" />
            <path d="M1.500 7.500L6 4.500V10.500ZM19.500 7.500L15 4.500V10.500Z" fill="#3f6fa8" />
          </svg>
        </button>
        <button type="button" aria-label="Fit page">
          <svg width="20" height="20" viewBox="0 0 20 20" fill="none" aria-hidden="true">
            <path d="M1 1H19V19H1Z" fill="#fff" stroke="#7a8ea3" strokeWidth="1.500" />
            <path d="M3 7.500H17M3 10H17M3 12.500H17" stroke="#9bb9dc" strokeWidth="1.300" />
            <path d="M10 1.500L13.500 5H6.500ZM10 18.500L13.500 14.500H6.500Z" fill="#3f6fa8" />
          </svg>
        </button>
      </div>
      <div className="flex items-center pr-[23px] pl-[23px]">
        <button type="button" aria-label="Zoom out">
          <svg width="12" height="12" viewBox="0 0 12 12" aria-hidden="true">
            <path d="M0 6H12" stroke="#fff" strokeWidth="3" />
          </svg>
        </button>
        <div className="relative mr-6 ml-[25px] flex w-[135px] items-center">
          <span className="absolute left-[63px] h-[10px] w-0.5 bg-white" />
          <input
            type="range"
            aria-label="Zoom"
            min={0}
            max={100}
            defaultValue={31}
            className="h-5 w-full appearance-none bg-transparent [&::-webkit-slider-runnable-track]:h-0.5 [&::-webkit-slider-runnable-track]:bg-white [&::-webkit-slider-thumb]:-mt-[9px] [&::-webkit-slider-thumb]:h-5 [&::-webkit-slider-thumb]:w-[7px] [&::-webkit-slider-thumb]:appearance-none [&::-webkit-slider-thumb]:bg-white"
          />
        </div>
        <button type="button" aria-label="Zoom in">
          <svg width="12" height="12" viewBox="0 0 12 12" aria-hidden="true">
            <path d="M0 6H12M6 0V12" stroke="#fff" strokeWidth="3" />
          </svg>
        </button>
        <span className="ml-[35px]">70%</span>
      </div>
    </footer>
  );
}

/* ---------- page ---------- */

export default function App() {
  return (
    <div className="flex h-screen flex-col overflow-hidden bg-white font-['Liberation_Sans',Arial,sans-serif] text-[#444]">
      <header className="flex h-11 shrink-0 items-center bg-[#fafafa] pr-[23px] pl-[22px]">
        <svg width="22" height="22" viewBox="0 0 22 22" aria-hidden="true">
          <path d="M4 0H18V6H4Z" fill="#1a6fae" />
          <path d="M6.500 2.500H15.500V6H6.500Z" fill="#fafafa" />
          <path d="M1 5.500H21Q22 5.500 22 6.500V16H0V6.500Q0 5.500 1 5.500Z" fill="#1a6fae" />
          <path d="M3 8.500H19V13.500H3Z" fill="#fafafa" />
          <path d="M4.500 10.200H17.500V12.200H4.500Z" fill="#1a6fae" />
          <path d="M4 15H18V21H4Z" fill="#1a6fae" />
        </svg>
        <h1 className="ml-[18px] flex-1 font-['Noto_Sans','Open_Sans',sans-serif] text-[17px] text-[#1a1a1a]">
          SampleMaterialDocument.1 (Editing Layout)
        </h1>
        <button type="button" aria-label="Open in window">
          <svg width="18" height="17" viewBox="0 0 18 17" fill="none" aria-hidden="true">
            <path d="M.8.800H17.200V16.200H.8Z" fill="#fff" stroke="#1f74b1" strokeWidth="1.500" />
            <path d="M0 0H18V4H0Z" fill="#1f74b1" />
            <path d="M9 14V6.500M4.500 10.500L9 6L13.500 10.500" stroke="#1f74b1" strokeWidth="1.400" />
          </svg>
        </button>
      </header>

      <div className="flex h-[54px] shrink-0 items-end bg-[#0079cb] pr-3 pl-[14px] text-base text-white">
        <div className="flex w-[124px] items-center gap-[26px] pb-[11px]">
          <button type="button" aria-label="Save">
            <svg width="20" height="20" viewBox="0 0 20 20" fill="none" aria-hidden="true">
              <path d="M1.200 1.200H18.800V18.800H1.200Z" stroke="#fff" strokeWidth="2.300" />
              <path d="M3 .5V9.500H17V.5" stroke="#fff" strokeWidth="1.800" />
              <path d="M2 12H18V19H2Z" fill="#fff" />
              <path d="M5.500 14H14.500V19H5.500Z" fill="#0079cb" />
              <path d="M7.500 15H10.500V19H7.500Z" fill="#fff" />
            </svg>
          </button>
          <button type="button" aria-label="Undo">
            <svg width="19" height="20" viewBox="0 0 19 20" fill="none" aria-hidden="true">
              <path d="M2 6H11.500Q17.500 6.500 17.500 12T11.500 18H8" stroke="#fff" strokeWidth="2.900" />
              <path d="M7.500 .8L2 6L7.500 11.200" stroke="#fff" strokeWidth="2.900" />
            </svg>
          </button>
          <button type="button" aria-label="Redo" disabled>
            <svg width="19" height="20" viewBox="0 0 19 20" fill="none" aria-hidden="true">
              <path d="M17 6H7.500Q1.500 6.500 1.500 12T7.500 18H11" stroke="#429cda" strokeWidth="2.600" />
              <path d="M11.500 .8L17 6L11.500 11.200" stroke="#429cda" strokeWidth="2.600" />
            </svg>
          </button>
        </div>
        <div role="tablist" className="flex flex-1 gap-[6px]">
          <button type="button" role="tab" aria-selected="true" className="h-[41px] bg-white px-[23px] text-[#0079cb]">Home</button>
          <button type="button" role="tab" aria-selected="false" className="h-[41px] px-[23px]">Insert</button>
          <button type="button" role="tab" aria-selected="false" className="h-[41px] px-[23px]">Page</button>
          <button type="button" role="tab" aria-selected="false" className="h-[41px] px-[23px]">Layout</button>
        </div>
        <button type="button" aria-label="Restore window" className="pb-[14px]">
          <svg width="15" height="14" viewBox="0 0 15 14" fill="none" aria-hidden="true">
            <path d="M5.500 4V1.200H13.800V8.500H10" stroke="#fff" strokeWidth="2.200" />
            <path d="M1.200 5.500H9.200V12.800H1.200Z" stroke="#fff" strokeWidth="2.200" />
          </svg>
        </button>
      </div>

      <Ribbon />

      <div className="flex min-h-0 flex-1">
        <Toolbox />
        <DictionaryPanel />
        <Surface />
      </div>

      <StatusBar />
    </div>
  );
}
